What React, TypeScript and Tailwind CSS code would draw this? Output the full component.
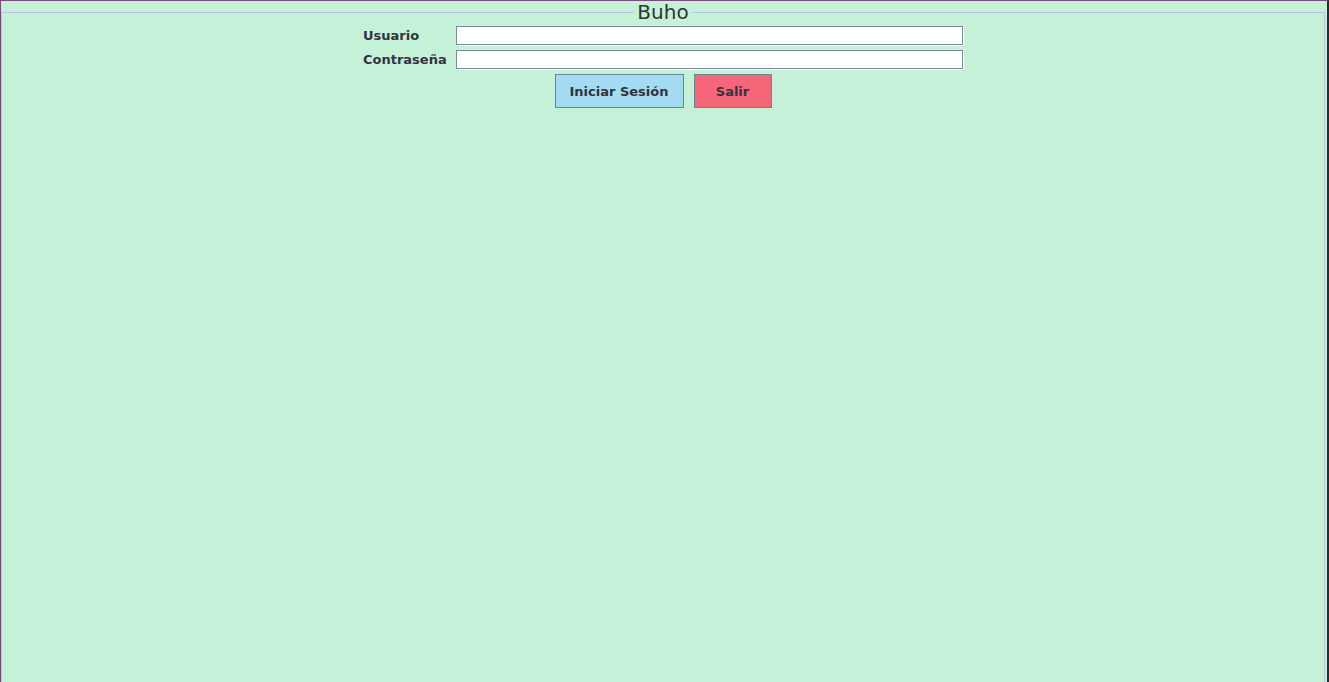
import React from 'react';

const App: React.FC = () => {
  return (
    <div className="h-[682px] w-full overflow-hidden bg-[#c6f1d9] border-l border-t border-[#7b4c7b] border-r-2 border-r-[#2a2a2a] font-['DejaVu_Sans',sans-serif]">
      <fieldset className="mr-[2px] h-[720px] border border-[#b3c6e6] min-w-0">
        <legend className="mx-auto px-[3px] text-[20px] leading-[22px] text-[#333333]">Buho</legend>

        <div className="w-[600px] mx-auto mt-[3px] flex flex-col gap-[5px]">
          <div className="flex items-center h-[19px]">
            <label className="w-[93px] text-[13px] font-bold text-[#333340]">Usuario</label>
            <input type="text" className="flex-1 h-[19px] bg-white border border-[#7a8a99] shadow-[1px_1px_0_#ffffff] outline-none" />
          </div>
          <div className="flex items-center h-[19px]">
            <label className="w-[93px] text-[13px] font-bold text-[#333340]">Contraseña</label>
            <input type="password" className="flex-1 h-[19px] bg-white border border-[#7a8a99] shadow-[1px_1px_0_#ffffff] outline-none" />
          </div>
        </div>

        <div className="flex justify-center gap-[10px] mt-[5px]">
          <button className="w-[129px] h-[34px] pt-[1px] bg-[#a3dbf3] border border-[#6d8494] text-[13px] font-bold text-[#333340]">
            Iniciar Sesión
          </button>
          <button className="w-[78px] h-[34px] pt-[1px] bg-[#f46678] border border-[#6d8494] text-[13px] font-bold text-[#333340]">
            Salir
          </button>
        </div>
      </fieldset>
    </div>
  );
};

export default App;
